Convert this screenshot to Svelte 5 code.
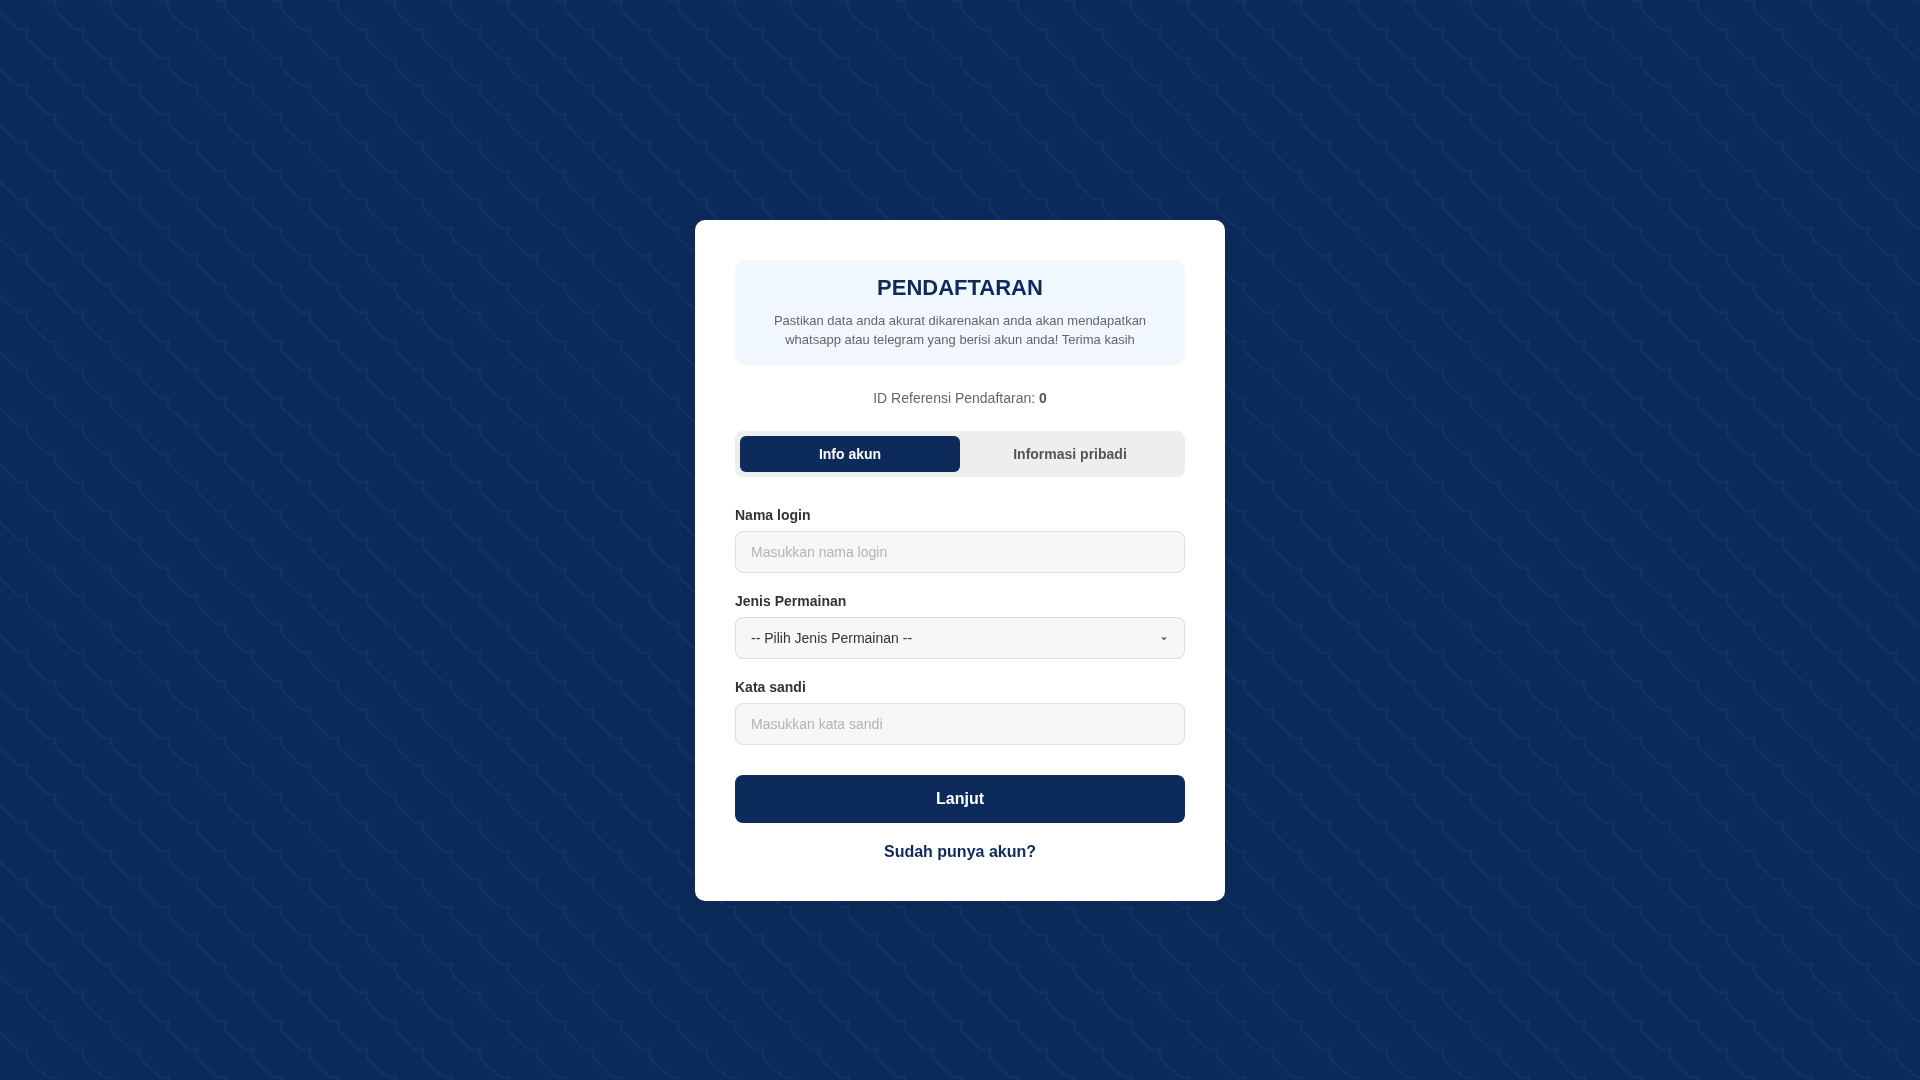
<script>
  const pattern =
    "data:image/svg+xml," +
    encodeURIComponent(
      `<svg xmlns='http://www.w3.org/2000/svg' width='56.67' height='56.67' viewBox='0 0 56.67 56.67'><g fill='none' stroke='#11336c' stroke-width='2' stroke-linecap='round'><path d='M55.5 2 C53.5 6 54.5 9 57 12 M0 12 L 17 28.5 C21 30.5 25 30 27.5 27.5'/><path d='M27.2 30.3 C25.2 34.3 26.2 37.3 29 40 L45.5 56.67 M45.5 0 C49 2.3 53 2 55.5 0'/></g></svg>`
    );
  const arrow =
    "data:image/svg+xml," +
    encodeURIComponent(
      `<svg xmlns='http://www.w3.org/2000/svg' width='6' height='4' viewBox='0 0 6 4'><path d='M0 0.5 H6 L3 3.5 Z' fill='#666'/></svg>`
    );
</script>

<div class="page" style="background-image:url(&quot;{pattern}&quot;)">
  <main class="card">
    <header class="intro">
      <h1>PENDAFTARAN</h1>
      <p>Pastikan data anda akurat dikarenakan anda akan mendapatkan whatsapp atau telegram yang berisi akun anda! Terima kasih</p>
    </header>

    <div class="ref">ID Referensi Pendaftaran: <strong>0</strong></div>

    <div class="tabs">
      <button class="tab active" type="button">Info akun</button>
      <button class="tab" type="button">Informasi pribadi</button>
    </div>

    <form class="fields" onsubmit={(e) => e.preventDefault()}>
      <div class="field">
        <label for="login">Nama login</label>
        <input id="login" type="text" placeholder="Masukkan nama login" />
      </div>
      <div class="field">
        <label for="game">Jenis Permainan</label>
        <select id="game" style="background-image:url(&quot;{arrow}&quot;)">
          <option>-- Pilih Jenis Permainan --</option>
        </select>
      </div>
      <div class="field">
        <label for="pass">Kata sandi</label>
        <input id="pass" type="password" placeholder="Masukkan kata sandi" />
      </div>
      <button class="submit" type="submit">Lanjut</button>
    </form>

    <a class="login" href="#login">Sudah punya akun?</a>
  </main>
</div>

<style>
  :global(body) {
    margin: 0;
    background: #0d2b5a;
  }
  .page {
    min-height: 1080px;
    box-sizing: border-box;
    padding-top: 220px;
    display: flex;
    justify-content: center;
    align-items: flex-start;
    background-color: #0d2b5a;
    background-size: 56.67px 56.67px;
    font-family: "Liberation Sans", Arial, sans-serif;
  }
  .card {
    width: 530px;
    box-sizing: border-box;
    padding: 40px;
    background: #fff;
    border-radius: 10px;
    box-shadow: 0 4px 15px rgba(0, 0, 0, 0.1);
    display: flex;
    flex-direction: column;
    will-change: transform;
  }
  .intro {
    background: #f0f7ff;
    border-radius: 10px;
    padding: 15px 15px 16px;
    text-align: center;
  }
  h1 {
    margin: 0 0 10px;
    font-size: 22px;
    line-height: 26px;
    font-weight: 700;
    color: #0d2b5a;
  }
  .intro p {
    margin: 0;
    font-size: 13px;
    line-height: 19px;
    color: #666;
    padding: 0 20px;
  }
  .ref {
    margin-top: 25px;
    text-align: center;
    font-size: 14px;
    line-height: 16px;
    color: #666;
  }
  .ref strong {
    color: #555;
  }
  .tabs {
    margin-top: 25px;
    display: flex;
    padding: 5px;
    background: #eee;
    border-radius: 8px;
  }
  .tab {
    flex: 1;
    height: 36px;
    border: 0;
    border-radius: 6px;
    background: transparent;
    font: 700 14px "Liberation Sans", Arial, sans-serif;
    color: #555;
  }
  .tab.active {
    background: #0d2b5a;
    color: #fff;
  }
  .fields {
    margin-top: 30px;
    display: flex;
    flex-direction: column;
    gap: 20px;
  }
  .field {
    display: flex;
    flex-direction: column;
    gap: 8px;
  }
  label {
    font-size: 14px;
    line-height: 16px;
    font-weight: 700;
    color: #333;
  }
  input,
  select {
    width: 100%;
    height: 42px;
    box-sizing: border-box;
    padding: 0 15px;
    background-color: #f7f7f7;
    border: 1px solid #ddd;
    border-radius: 8px;
    font: 14px "Liberation Sans", Arial, sans-serif;
    color: #333;
  }
  select {
    appearance: none;
    background-repeat: no-repeat;
    background-position: right 17px top 19px;
    background-size: 6px 4px;
  }
  input::placeholder {
    color: #b3b3b3;
  }
  .submit {
    margin-top: 10px;
    height: 48px;
    border: 0;
    border-radius: 8px;
    background: #0d2b5a;
    color: #fff;
    font: 700 16px "Liberation Sans", Arial, sans-serif;
  }
  .login {
    margin-top: 20px;
    text-align: center;
    font-size: 16px;
    line-height: 18px;
    font-weight: 700;
    color: #0d2b5a;
    text-decoration: none;
  }
</style>
